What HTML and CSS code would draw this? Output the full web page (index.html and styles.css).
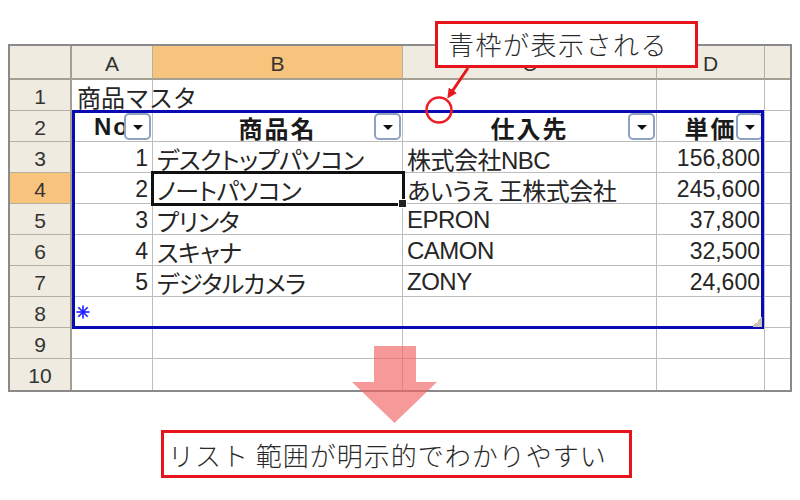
FILE: index.html
```html
<!DOCTYPE html>
<html lang="ja">
<head>
<meta charset="utf-8">
<link rel="stylesheet" href="styles.css">
</head>
<body>
<div class="page">
  <div class="sheet">
    <div class="hd corner"></div>
    <div class="hd col">A</div>
    <div class="hd col on">B</div>
    <div class="hd col">C</div>
    <div class="hd col">D</div>
    <div class="hd col last"></div>

    <div class="hd row">1</div>
    <div class="c txt title">商品マスタ</div>
    <div class="c"></div>
    <div class="c"></div>
    <div class="c"></div>
    <div class="c last"></div>

    <div class="hd row">2</div>
    <div class="c th"><span>No</span><i class="dd"></i></div>
    <div class="c th"><span>商品名</span><i class="dd"></i></div>
    <div class="c th"><span>仕入先</span><i class="dd"></i></div>
    <div class="c th"><span>単価</span><i class="dd"></i></div>
    <div class="c last"></div>

    <div class="hd row">3</div>
    <div class="c num">1</div>
    <div class="c txt">デスクトップパソコン</div>
    <div class="c txt">株式会社NBC</div>
    <div class="c num">156,800</div>
    <div class="c last"></div>

    <div class="hd row on">4</div>
    <div class="c num">2</div>
    <div class="c txt sel">ノートパソコン</div>
    <div class="c txt">あいうえ 王株式会社</div>
    <div class="c num">245,600</div>
    <div class="c last"></div>

    <div class="hd row">5</div>
    <div class="c num">3</div>
    <div class="c txt">プリンタ</div>
    <div class="c txt">EPRON</div>
    <div class="c num">37,800</div>
    <div class="c last"></div>

    <div class="hd row">6</div>
    <div class="c num">4</div>
    <div class="c txt">スキャナ</div>
    <div class="c txt">CAMON</div>
    <div class="c num">32,500</div>
    <div class="c last"></div>

    <div class="hd row">7</div>
    <div class="c num">5</div>
    <div class="c txt">デジタルカメラ</div>
    <div class="c txt">ZONY</div>
    <div class="c num">24,600</div>
    <div class="c last"></div>

    <div class="hd row">8</div>
    <div class="c star"><svg width="14" height="14" viewBox="0 0 14 14"><g stroke="#1a1aff" stroke-width="1.6"><line x1="7" y1="0.5" x2="7" y2="13.5"/><line x1="0.5" y1="7" x2="13.5" y2="7"/><line x1="2.3" y1="2.3" x2="11.7" y2="11.7"/><line x1="11.7" y1="2.3" x2="2.3" y2="11.7"/></g></svg></div>
    <div class="c"></div>
    <div class="c"></div>
    <div class="c"></div>
    <div class="c last"></div>

    <div class="hd row">9</div>
    <div class="c"></div>
    <div class="c"></div>
    <div class="c"></div>
    <div class="c"></div>
    <div class="c last"></div>

    <div class="hd row btm">10</div>
    <div class="c btm"></div>
    <div class="c btm"></div>
    <div class="c btm"></div>
    <div class="c btm"></div>
    <div class="c last btm"></div>

    <div class="list-frame"><i class="grip"></i></div>
  </div>

  <div class="note">リスト 範囲が明示的でわかりやすい</div>

  <div class="callout">青枠が表示される</div>

  <svg class="marks" width="800" height="500" viewBox="0 0 800 500">
    <defs>
      <marker id="ah" markerWidth="10" markerHeight="10" refX="7" refY="5" orient="auto" markerUnits="userSpaceOnUse">
        <path d="M0,0 L10,5 L0,10 z" fill="#e8191e"/>
      </marker>
    </defs>
    <circle cx="439" cy="110" r="12.5" fill="none" stroke="#ee1c24" stroke-width="2.5"/>
    <line x1="468" y1="68" x2="449" y2="96" stroke="#e8191e" stroke-width="3" marker-end="url(#ah)"/>
    <polygon points="374,346 416,346 416,382 437,382 394.5,423 352,382 374,382" fill="#f06262" fill-opacity="0.65"/>
  </svg>
</div>
</body>
</html>
```

FILE: styles.css
```css
html, body {
  margin: 0;
  padding: 0;
  background: #ffffff;
}

body {
  width: 800px;
  height: 500px;
  overflow: hidden;
  font-family: "Liberation Sans", "Noto Sans CJK JP", sans-serif;
  color: #262626;
}

.page {
  position: relative;
  width: 800px;
  height: 500px;
  padding: 44px 8px 0;
  box-sizing: border-box;
}

.sheet {
  position: relative;
  display: grid;
  grid-template-columns: 62px 81px 250px 254px 108px 25px;
  grid-template-rows: 34px repeat(10, 31px);
  width: 784px;
  box-sizing: border-box;
  border: 2px solid #8a8a8a;
  background: #ffffff;
}

.hd {
  box-sizing: border-box;
  background: #efebe0;
  border-right: 1px solid #b3b0a4;
  border-bottom: 1px solid #b3b0a4;
  display: flex;
  align-items: center;
  justify-content: center;
  font-size: 21px;
  color: #333;
}

.hd.col {
  border-bottom: 2px solid #a3a093;
  padding-top: 3px;
}

.hd.corner {
  border-bottom: 2px solid #a3a093;
  border-right: 2px solid #a3a093;
}

.hd.row {
  border-right: 2px solid #a3a093;
  padding-top: 3px;
}

.hd.on {
  background: #f8c37c;
}

.hd.last,
.c.last {
  border-right: none;
}

.btm {
  border-bottom: none !important;
}

.c {
  position: relative;
  box-sizing: border-box;
  border-right: 1px solid #bdbdbd;
  border-bottom: 1px solid #bdbdbd;
  display: flex;
  align-items: center;
  white-space: nowrap;
  font-size: 23px;
  padding-top: 2px;
}

.c.txt {
  padding-left: 4px;
  font-family: "Liberation Sans", "Noto Sans CJK JP", sans-serif;
  font-feature-settings: "palt";
  font-size: 24px;
  letter-spacing: -0.5px;
}

.c.title {
  padding-left: 5px;
  letter-spacing: 0;
  font-feature-settings: normal;
  overflow: visible;
  z-index: 1;
}

.c.num {
  justify-content: flex-end;
  padding-right: 4px;
}

.c.th {
  justify-content: center;
  font-weight: bold;
  font-size: 24px;
  color: #1a1a1a;
}

.c.th span {
  font-family: "Liberation Sans", "Noto Sans CJK JP", sans-serif;
  letter-spacing: 2px;
}

.dd {
  position: absolute;
  right: 1px;
  top: 2px;
  width: 27px;
  height: 27px;
  box-sizing: border-box;
  border: 2px solid #8ea2c4;
  border-radius: 5px;
  background: #ffffff;
}

.dd::after {
  content: "";
  position: absolute;
  left: 50%;
  top: 50%;
  margin-left: -5px;
  margin-top: -2px;
  border-left: 5px solid transparent;
  border-right: 5px solid transparent;
  border-top: 5px solid #111;
}

.c.sel {
  outline: 3px solid #111;
  outline-offset: -1px;
  z-index: 2;
}

.c.sel::after {
  content: "";
  position: absolute;
  right: -5px;
  bottom: -5px;
  width: 7px;
  height: 7px;
  background: #222;
  border: 1px solid #fff;
}

.c.star {
  padding-left: 4px;
  padding-top: 0;
}

.c.star svg {
  display: block;
}

.list-frame {
  position: absolute;
  left: 62px;
  top: 64px;
  width: 692px;
  height: 219px;
  box-sizing: border-box;
  border: 3px solid #0a0ab4;
  z-index: 3;
  pointer-events: none;
}

.grip {
  position: absolute;
  right: -1px;
  bottom: -1px;
  width: 10px;
  height: 10px;
  background: linear-gradient(135deg, transparent 50%, #c9c5b6 50%);
}

.note {
  margin: 38px 0 0 153px;
  width: 471px;
  height: 48px;
  box-sizing: border-box;
  border: 3px solid #e8141c;
  padding: 0 0 0 4px;
  display: flex;
  align-items: center;
  font-family: "Noto Sans CJK JP", sans-serif;
  font-weight: 300;
  font-size: 26px;
  letter-spacing: 1px;
  color: #2a2a2a;
}

.callout {
  position: absolute;
  left: 435px;
  top: 21px;
  width: 263px;
  height: 47px;
  box-sizing: border-box;
  border: 3px solid #e8141c;
  background: #ffffff;
  padding: 0 0 2px 10px;
  display: flex;
  align-items: center;
  font-family: "Noto Sans CJK JP", sans-serif;
  font-weight: 300;
  font-size: 26px;
  letter-spacing: 1.5px;
  color: #2a2a2a;
  z-index: 5;
}

.marks {
  position: absolute;
  left: 0;
  top: 0;
  z-index: 6;
  pointer-events: none;
}
```
